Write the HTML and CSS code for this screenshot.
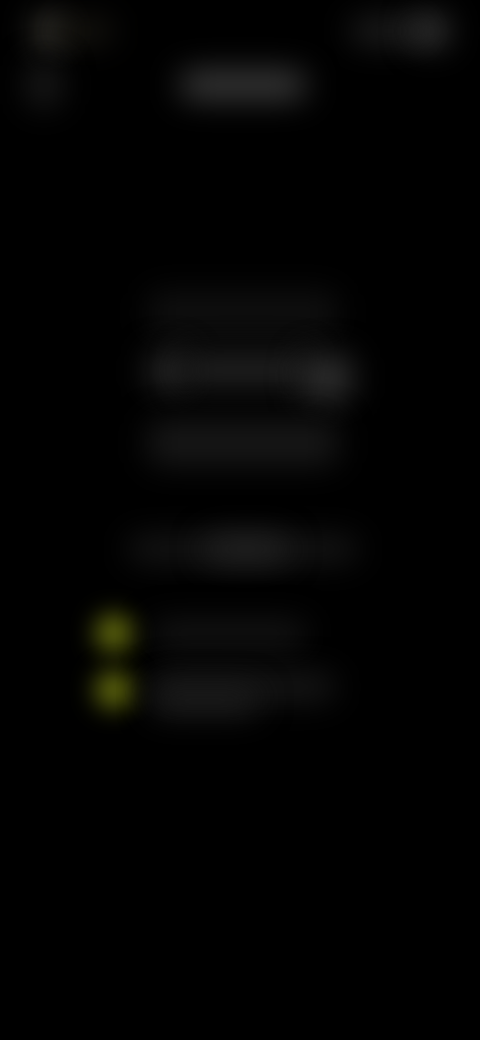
FILE: index.html
```html
<!DOCTYPE html>
<html lang="en">
<head>
<meta charset="utf-8">
<title>Blurred screen</title>
<link rel="stylesheet" href="styles.css">
</head>
<body>
<main class="screen">
  <header class="status">
    <div class="status-left"><span class="blob clock-dot"></span><span class="blob clock-rest"></span></div>
    <div class="status-right"><span class="blob sys-rest"></span><span class="blob sys-dot"></span></div>
  </header>
  <nav class="nav">
    <span class="blob back"></span>
    <span class="blob title"></span>
  </nav>
  <section class="hero">
    <span class="blob hero-one"></span>
    <div class="hero-two">
      <span class="blob hero-two-a"></span>
      <span class="blob hero-two-b"></span>
      <span class="blob hero-two-c"></span>
    </div>
    <span class="blob hero-three"></span>
  </section>
  <section class="sub">
    <span class="blob sub-line"></span>
    <span class="blob sub-glow"></span>
  </section>
  <ul class="list">
    <li class="item"><span class="blob dot"></span><span class="blob text-one"></span></li>
    <li class="item"><span class="blob dot"></span><span class="text-two"><span class="blob text-two-a"></span><span class="blob text-two-b"></span></span></li>
  </ul>
</main>
</body>
</html>
```
FILE: styles.css
```css
html, body { margin: 0; padding: 0; background: #000; }
.screen { width: 480px; height: 1040px; overflow: hidden; background: #000; display: flex; flex-direction: column; }
.blob { display: block; border-radius: 12px; filter: blur(16px); flex: none; }

.status { display: flex; justify-content: space-between; align-items: center; padding: 18px 32px 0 30px; height: 26px; }
.status-left, .status-right { display: flex; align-items: center; }
.clock-dot { width: 30px; height: 30px; background: #4c4a42; margin-left: 4px; }
.clock-rest { width: 56px; height: 22px; background: #1a1812; margin-left: -6px; }
.sys-rest { width: 78px; height: 24px; background: #222; margin-left: -6px; }
.sys-dot { width: 34px; height: 30px; background: #3e3e3e; margin-left: -14px; }

.nav { display: flex; align-items: center; padding: 22px 0 0 28px; height: 38px; }
.back { width: 32px; height: 44px; background: #1c1c1c; }
.title { width: 126px; height: 26px; background: #424242; margin-left: 120px; }

.hero { display: flex; flex-direction: column; align-items: flex-start; padding: 188px 0 0 148px; }
.hero-one { width: 190px; height: 42px; background: #101010; }
.hero-two { display: flex; align-items: flex-start; margin-top: 18px; height: 54px; }
.hero-two-a { width: 40px; height: 38px; background: #2a2a2a; }
.hero-two-b { width: 128px; height: 32px; background: #242424; margin: 2px 0 0 -6px; }
.hero-two-c { width: 50px; height: 46px; background: #303030; margin: 3px 0 0 -8px; }
.hero-three { width: 190px; height: 44px; background: #181818; margin-top: 15px; }

.sub { display: flex; flex-direction: column; padding: 72px 0 0 128px; }
.sub-line { width: 230px; height: 24px; background: #191919; }
.sub-glow { width: 84px; height: 24px; background: #262626; margin: -24px 0 0 76px; }

.list { list-style: none; margin: 0; padding: 53px 0 0 95px; display: flex; flex-direction: column; gap: 17px; }
.item { display: flex; align-items: flex-start; height: 40px; }
.dot { width: 38px; height: 38px; border-radius: 50%; background: #626a0e; filter: blur(12px); }
.text-one { width: 156px; height: 24px; background: #181818; margin: 8px 0 0 18px; }
.text-two { display: flex; flex-direction: column; margin: 3px 0 0 18px; }
.text-two-a { width: 184px; height: 26px; background: #1a1a1a; }
.text-two-b { width: 108px; height: 26px; background: #1e1e1e; margin-top: -12px; }
```
